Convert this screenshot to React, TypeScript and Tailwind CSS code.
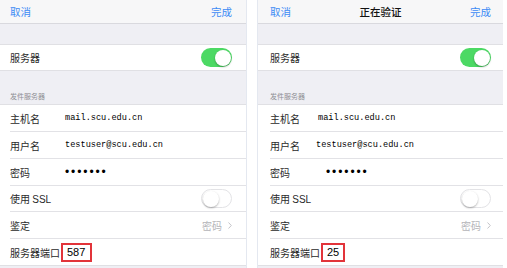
import React from 'react';

// Two iOS "outgoing server" settings screens side by side

type PanelProps = {
    title?: string;
    port: string;
    padL: string;
    padR: string;
    hostPad: string;
    userPad: string;
    dotsPad: string;
    boxW: string;
    width: string;
};

const Toggle: React.FC<{ on: boolean }> = ({ on }) => (
    <div
        className={
            on
                ? 'w-[31px] h-[19px] rounded-full bg-[#4cd964] p-[1.5px] flex justify-end'
                : 'w-[31px] h-[19px] rounded-full bg-white border border-[#e3e3e6] p-[1px] flex justify-start'
        }
    >
        <div className="w-[16px] h-[16px] rounded-full bg-white shadow-[0_1px_2px_rgba(0,0,0,0.3)]" />
    </div>
);

const Row: React.FC<{ h: string; last?: boolean; children: React.ReactNode }> = ({ h, last, children }) => (
    <div className={`${h} flex items-center`}>
        <div className={last ? 'flex-1 h-full flex items-center' : 'flex-1 h-full flex items-center border-b border-[#e2e2e6]'}>{children}</div>
    </div>
);

const Panel: React.FC<PanelProps> = ({ title, port, padL, padR, hostPad, userPad, dotsPad, boxW, width }) => (
    <div className={`${width} h-full bg-[#efeff4] flex flex-col font-['Noto_Sans_CJK_SC',sans-serif] text-[10px] text-[#2a2a2a]`}>
        {/* nav bar */}
        <div className={`h-[24px] shrink-0 bg-[#f7f7f8] border-b border-[#d9d9de] flex items-center justify-between ${padL} ${padR} relative`}>
            <span className="text-[#3d8bf5] text-[10.5px]">取消</span>
            {title && <span className="absolute left-1/2 -translate-x-1/2 text-[10.5px] font-medium text-[#111]">{title}</span>}
            <span className="text-[#3d8bf5] text-[10.5px]">完成</span>
        </div>
        <div className="h-[20px] shrink-0" />
        {/* server toggle */}
        <div className={`h-[27px] shrink-0 bg-white border-y border-[#e0e0e4] flex items-center justify-between ${padL} ${padR}`}>
            <span>服务器</span>
            <Toggle on />
        </div>
        <div className={`h-[33px] shrink-0 flex items-end pb-[4px] ${padL}`}>
            <span className="text-[7px] text-[#8e8e93] leading-none">发件服务器</span>
        </div>
        {/* outgoing server group */}
        <div className={`shrink-0 bg-white border-y border-[#e0e0e4] ${padL}`}>
            <Row h="h-[27px]">
                <span className="w-[55px]">主机名</span>
                <span className={`${hostPad} font-['Liberation_Mono',monospace] text-[8.6px] text-black`}>mail.scu.edu.cn</span>
            </Row>
            <Row h="h-[27px]">
                <span className="w-[55px]">用户名</span>
                <span className={`${userPad} font-['Liberation_Mono',monospace] text-[8.6px] text-black`}>testuser@scu.edu.cn</span>
            </Row>
            <Row h="h-[27px]">
                <span className="w-[55px]">密码</span>
                <span className={`${dotsPad} font-['Liberation_Sans',sans-serif] text-[12px] tracking-[1.9px] text-black`}>•••••••</span>
            </Row>
            <Row h="h-[26px]">
                <div className={`flex-1 flex items-center justify-between ${padR}`}>
                    <span>
                        使用 <span className="font-['Liberation_Sans',sans-serif]">SSL</span>
                    </span>
                    <Toggle on={false} />
                </div>
            </Row>
            <Row h="h-[27px]">
                <div className={`flex-1 flex items-center justify-between ${padR}`}>
                    <span>鉴定</span>
                    <span className="text-[#b4b4b8] flex items-center gap-[6px]">
                        密码
                        <svg width="4" height="7" viewBox="0 0 4 7" fill="none">
                            <path d="M0.5 0.5L3.3 3.5L0.5 6.5" stroke="#c4c4c8" strokeWidth="1" />
                        </svg>
                    </span>
                </div>
            </Row>
            <Row h="h-[26px]" last>
                <span>服务器端口</span>
                <span className={`ml-[1px] ${boxW} h-[19px] border-2 border-solid border-[#e2343a] flex items-center pl-[4px] font-['Liberation_Sans',sans-serif] text-[11px] text-black`}>
                    {port}
                </span>
            </Row>
        </div>
    </div>
);

export default function App() {
    return (
        <div className="w-[507px] h-[268px] bg-white flex overflow-hidden">
            <div className="border-r border-[#e4e8f0] flex">
                <Panel
                    width="w-[246px]"
                    port="587"
                    padL="pl-[10px]"
                    padR="pr-[14px]"
                    hostPad="ml-0"
                    userPad="ml-0"
                    dotsPad="ml-0"
                    boxW="w-[31px]"
                />
            </div>
            <div className="w-[10px]" />
            <div className="border-l border-[#e4e8f0] flex">
                <Panel
                    width="w-[245px]"
                    title="正在验证"
                    port="25"
                    padL="pl-[12px]"
                    padR="pr-[12px]"
                    hostPad="ml-[-7px]"
                    userPad="ml-[-9px]"
                    dotsPad="ml-[1px]"
                    boxW="w-[24px]"
                />
            </div>
        </div>
    );
}
